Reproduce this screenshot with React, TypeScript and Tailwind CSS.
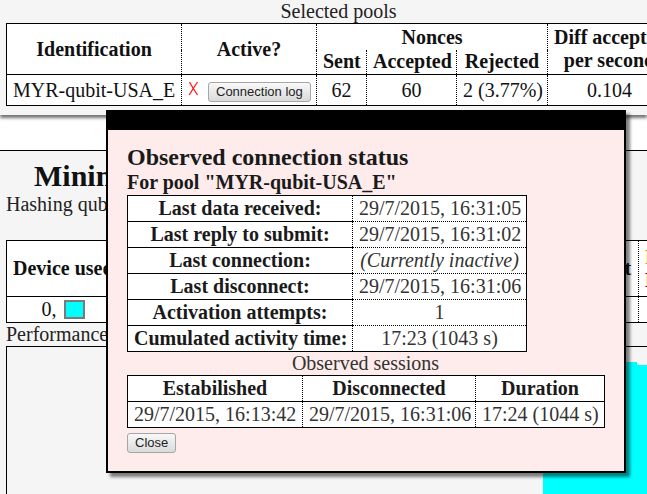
const th = "font-bold text-center px-[6px] py-0 whitespace-nowrap";
const td = "text-center px-[6px] py-0 whitespace-nowrap";
const dotR = "[border-right:1px_dotted_#000]";
const dotB = "[border-bottom:1px_dotted_#000]";
const solidB = "[border-bottom:1px_solid_#000]";

function GrayButton({ children }: { children: React.ReactNode }) {
  return (
    <button className="h-[20px] px-[7px] rounded-[3px] border border-[#a6a6a6] bg-linear-to-b from-[#f9f9f9] to-[#dadada] font-['Liberation_Sans',Arial,sans-serif] text-[13px] leading-[16px] text-[#222]">
      {children}
    </button>
  );
}

function RedCross() {
  return (
    <svg width="11" height="15" viewBox="0 0 11 15" className="inline-block align-baseline">
      <path d="M1.5 1 Q5 7.5 9.5 14" stroke="#ff1a1a" strokeWidth="1.3" fill="none" />
      <path d="M9.5 1 Q5.5 7 1.2 14" stroke="#ff1a1a" strokeWidth="1.3" fill="none" />
    </svg>
  );
}

function PoolsPanel() {
  return (
    <div className="relative z-10 h-[115px] bg-[#f5f5f5] shadow-[0_3px_3px_rgba(0,0,0,0.55)]">
      <div className="ml-[6px] w-[665px]">
        <div className="text-center text-[#222]">Selected pools</div>
        <table className="w-[665px] table-fixed border-collapse border border-black bg-white">
          <colgroup>
            <col className="w-[175px]" />
            <col className="w-[135px]" />
            <col className="w-[50px]" />
            <col className="w-[90px]" />
            <col className="w-[91px]" />
            <col className="w-[124px]" />
          </colgroup>
          <thead>
            <tr className="h-[26px]">
              <th rowSpan={2} className={`${th} ${dotR} ${solidB}`}>Identification</th>
              <th rowSpan={2} className={`${th} ${dotR} ${solidB}`}>Active?</th>
              <th colSpan={3} className={`${th} ${dotR} pt-[2px]`}>Nonces</th>
              <th rowSpan={2} className={`${th} ${solidB}`}>
                Diff accepted
                <br />
                per second
              </th>
            </tr>
            <tr className="h-[25px]">
              <th className={`${th} ${dotR} ${solidB}`}>Sent</th>
              <th className={`${th} ${dotR} ${solidB}`}>Accepted</th>
              <th className={`${th} ${dotR} ${solidB}`}>Rejected</th>
            </tr>
          </thead>
          <tbody>
            <tr className="h-[31px]">
              <td className={`${td} ${dotR}`}>MYR-qubit-USA_E</td>
              <td className={`${td} ${dotR}`}>
                <RedCross />
                <span className="ml-[9px]">
                  <GrayButton>Connection log</GrayButton>
                </span>
              </td>
              <td className={`${td} ${dotR}`}>62</td>
              <td className={`${td} ${dotR}`}>60</td>
              <td className={`${td} ${dotR}`}>2 (3.77%)</td>
              <td className={td}>0.104</td>
            </tr>
          </tbody>
        </table>
      </div>
    </div>
  );
}

function DevicesPanel() {
  return (
    <div className="h-[344px] border-t border-black bg-[#f5f5f5]">
      <h2 className="pt-[8px] pl-[34px] text-[30px] font-bold leading-[34px] text-[#111]">Mining devices</h2>
      <div className="pl-[6px] text-[#222]">Hashing qubit on 1 device</div>
      <table className="mt-[24px] ml-[6px] w-[712px] table-fixed border-collapse border border-black bg-white">
        <colgroup>
          <col className="w-[113px]" />
          <col className="w-[181px]" />
          <col className="w-[120px]" />
          <col className="w-[112px]" />
          <col className="w-[106px]" />
          <col className="w-[80px]" />
        </colgroup>
        <thead>
          <tr className="h-[56px]">
            <th className={`${th} ${dotR} ${solidB}`}>Device used</th>
            <th className={`${th} ${dotR} ${solidB}`}>Hashrate</th>
            <th className={`${th} ${dotR} ${solidB}`}>Accepted</th>
            <th className={`${th} ${dotR} ${solidB}`}>Rejected</th>
            <th className={`${th} ${dotR} ${solidB}`}>Last result</th>
            <th className={`${th} ${solidB} text-left`}>
              <div className="text-[#f29a1f]">Reported</div>
              <div className="text-[#7a0000]">Effective</div>
            </th>
          </tr>
        </thead>
        <tbody>
          <tr className="h-[26px]">
            <td className={`${td} ${dotR}`}>
              0,
              <span className="ml-[7px] inline-block h-[19px] w-[21px] border-2 border-[#7a7a7a] bg-[#00ffff] align-[-3px]" />
            </td>
            <td className={`${td} ${dotR}`}>0.21 MH/s</td>
            <td className={`${td} ${dotR}`}>60</td>
            <td className={`${td} ${dotR}`}>2</td>
            <td className={`${td} ${dotR}`}>16:31:02</td>
            <td className={td} />
          </tr>
        </tbody>
      </table>
      <div className="pl-[6px] text-[#222]">Performance</div>
      <div className="ml-[6px] h-[200px] border-t border-l border-black">
        <svg width="660" height="160" className="block">
          <polygon points="536,15 630,15 630,18 660,18 660,160 536,160" fill="#00ffff" />
        </svg>
      </div>
    </div>
  );
}

function StatusDialog() {
  const rows: [string, React.ReactNode][] = [
    ["Last data received:", "29/7/2015, 16:31:05"],
    ["Last reply to submit:", "29/7/2015, 16:31:02"],
    ["Last connection:", <i key="c">(Currently inactive)</i>],
    ["Last disconnect:", "29/7/2015, 16:31:06"],
    ["Activation attempts:", "1"],
    ["Cumulated activity time:", "17:23 (1043 s)"],
  ];

  return (
    <div className="absolute left-[106px] top-[110px] z-20 h-[363px] w-[520px] border-2 border-black bg-[#fdeceb] shadow-[4px_4px_3px_rgba(0,0,0,0.5)]">
      <div className="h-[18px] bg-black" />
      <div className="pl-[19px] pt-[13px]">
        <h3 className="text-[24px] font-bold leading-[28px] text-[#1a1a1a]">Observed connection status</h3>
        <div className="font-bold text-[#1a1a1a]">For pool "MYR-qubit-USA_E"</div>
        <table className="mt-[1px] w-[399px] table-fixed border-collapse border border-black bg-white">
          <colgroup>
            <col className="w-[225px]" />
            <col className="w-[174px]" />
          </colgroup>
          <tbody>
            {rows.map(([label, value], i) => (
              <tr key={label} className="h-[26px]">
                <th className={`${th} ${i < rows.length - 1 ? solidB : ""} text-[#1a1a1a]`}>{label}</th>
                <td className={`${td} [border-left:1px_dotted_#000] ${i < rows.length - 1 ? dotB : ""} text-[#333]`}>{value}</td>
              </tr>
            ))}
          </tbody>
        </table>
        <div className="w-[477px] text-center text-[#333]">Observed sessions</div>
        <table className="w-[477px] table-fixed border-collapse border border-black bg-white">
          <colgroup>
            <col className="w-[175px]" />
            <col className="w-[173px]" />
            <col className="w-[129px]" />
          </colgroup>
          <thead>
            <tr className="h-[26px]">
              <th className={`${th} ${dotR} ${solidB} text-[#1a1a1a]`}>Estabilished</th>
              <th className={`${th} ${dotR} ${solidB} text-[#1a1a1a]`}>Disconnected</th>
              <th className={`${th} ${solidB} text-[#1a1a1a]`}>Duration</th>
            </tr>
          </thead>
          <tbody>
            <tr className="h-[26px] text-[#333]">
              <td className={`${td} ${dotR}`}>29/7/2015, 16:13:42</td>
              <td className={`${td} ${dotR}`}>29/7/2015, 16:31:06</td>
              <td className={td}>17:24 (1044 s)</td>
            </tr>
          </tbody>
        </table>
        <div className="mt-[5px] flex">
          <GrayButton>Close</GrayButton>
        </div>
      </div>
    </div>
  );
}

export default function App() {
  return (
    <div className="relative h-[494px] w-[647px] overflow-hidden bg-white font-['Liberation_Serif','Times_New_Roman',serif] text-[20px] leading-[23px] text-[#111]">
      <PoolsPanel />
      <div className="h-[35px] bg-white" />
      <DevicesPanel />
      <StatusDialog />
    </div>
  );
}
